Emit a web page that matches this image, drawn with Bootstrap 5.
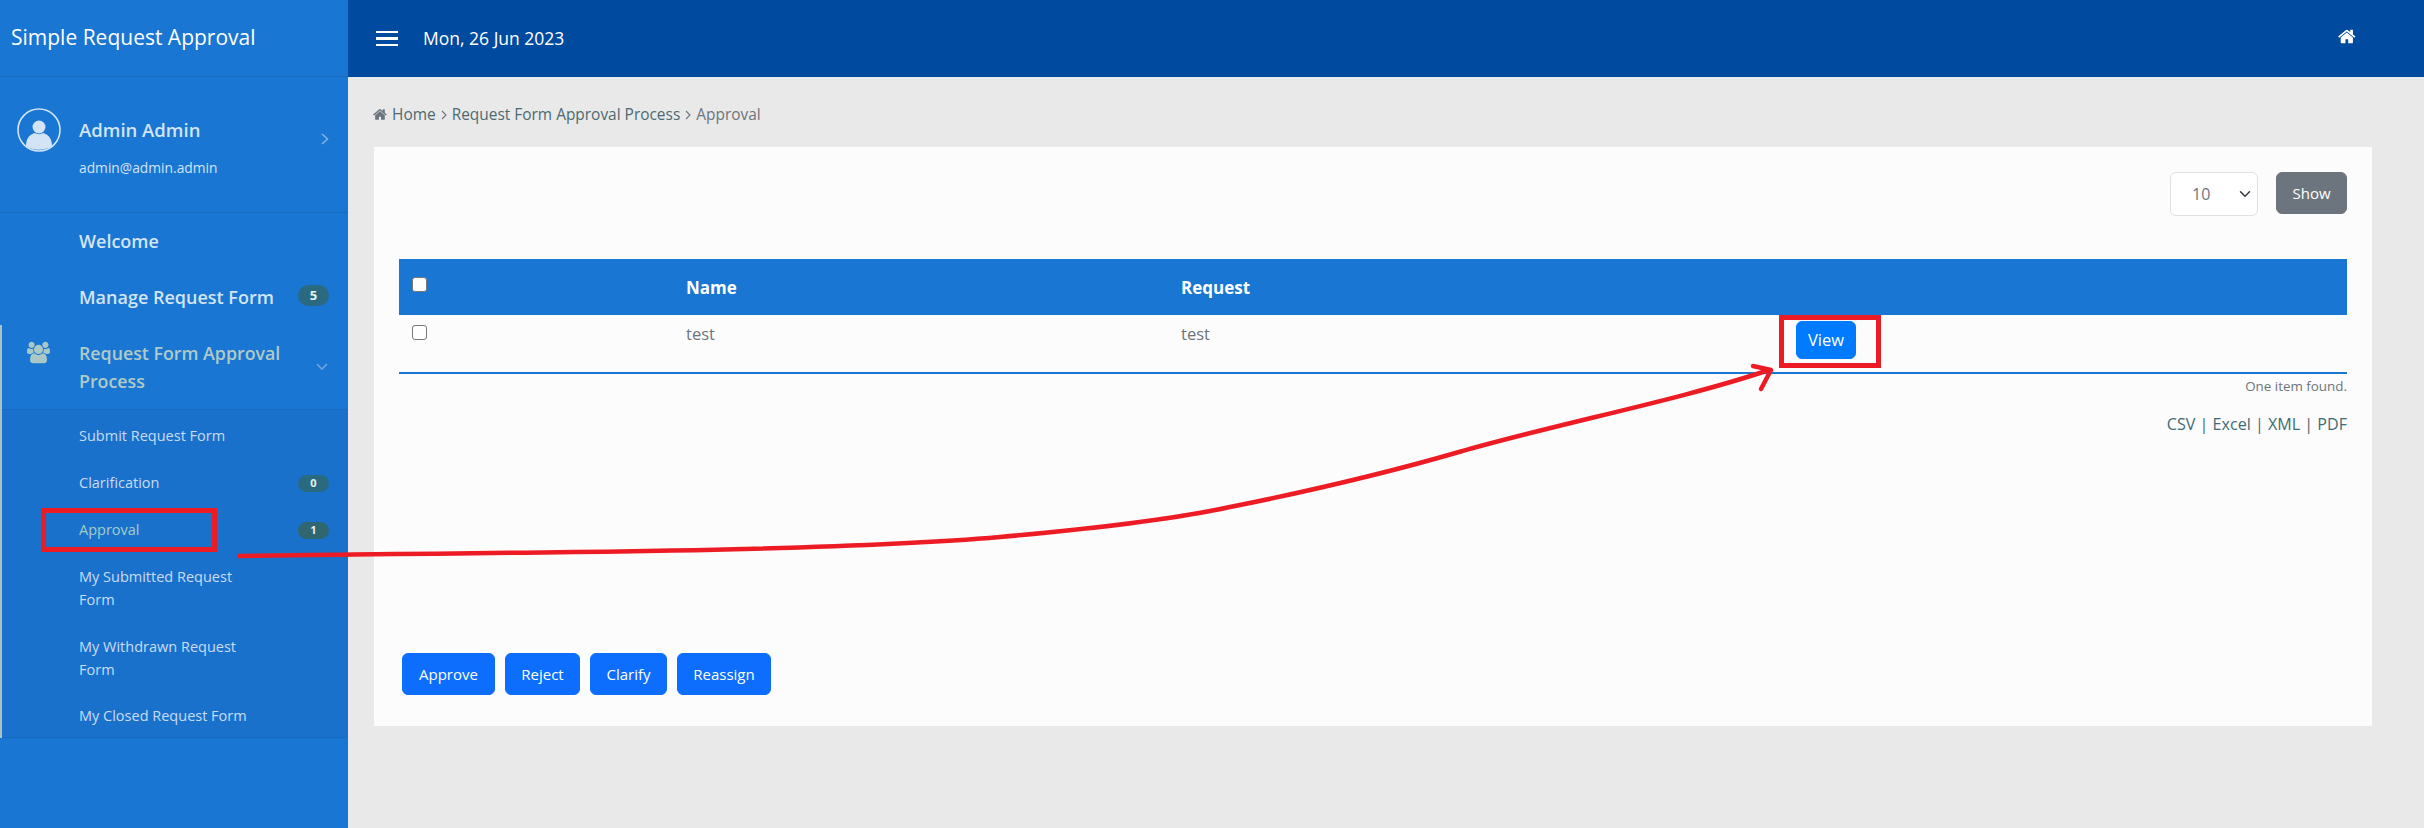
<!DOCTYPE html>
<html lang="en">
<head>
<meta charset="utf-8">
<title>Simple Request Approval</title>
<link href="https://cdn.jsdelivr.net/npm/bootstrap@5.3.0/dist/css/bootstrap.min.css" rel="stylesheet">
<style>
html,body{height:828px;overflow:hidden}
body{font-family:"Open Sans","Noto Sans",sans-serif;background:#e9e9e9;color:#6c757d;font-size:15px}
.app-shell{width:2424px;height:828px;position:relative}
.side{width:348px;background:#1976d2;color:#fff;flex:none}
.brand{height:77px;font-size:21px;padding-left:11px;border-bottom:1px solid #166bc1;padding-bottom:1px}
.profile{height:136px;border-bottom:1px solid #166bc1;padding:31px 18px 0 17px;color:#d3e4f7}
.avatar{width:44px;height:44px;flex:none}
.profile-name{font-weight:600;font-size:18.5px;margin-left:18px;line-height:24px;margin-top:10px}
.profile-mail{font-size:13.8px;margin-top:16px;line-height:20px;white-space:nowrap}
.chev{flex:none}
.top-item{height:56px;padding:0 19px 0 79px;font-weight:600;font-size:18px;color:#d3e4f7}
.pill{width:31px;background:#2a6a80;color:#e8f0f2;border-radius:12px;font-weight:700;font-size:13px;line-height:21px;height:21px;text-align:center;margin-top:-3px}
.pill-sm{height:16.5px;line-height:16px;font-size:11px;margin-top:2px}
.pill-dark{background:#2f6670}
.open-group{border-left:2px solid #a9c3c3}
.open-head{height:84px;padding:0 19px 0 77px;font-weight:600;font-size:17.8px;line-height:28px;color:#b0cac8;position:relative}
.group-ico{position:absolute;left:25px;top:16px}
.sub{background:#1971cc;border-top:1px solid #166bc1;border-bottom:1px solid #166bc1;color:#c9dcf5;font-size:14.5px;line-height:23px;padding-top:2px}
.sub-item{padding:0 19px 0 77px}
.sub-active{color:#a5cdc8}
.item-a,.item-b,.item-c{height:47px}
.item-d,.item-e{height:70px}
.item-f{height:44px}
.main{min-width:0}
.topbar{height:77px;background:#004a9f;color:#fff;padding:0 0 0 28px;font-size:17.5px}
.burger{width:22px;flex:none;margin-right:25px}
.burger i{display:block;height:2.5px;background:#fff;margin:4.2px 0}
.home-top{margin-left:auto;margin-right:67px;margin-top:-5px}
.crumb{padding:5px 25px 0;height:70px;font-size:15.45px;color:#4d6a70}
.crumb .sep{margin:0 5px 0 5px}
.crumb .here{color:#6c757d}
.panel{background:#fcfcfc;margin:0 52px 0 26px;height:579px;padding:25px 25px 0 25px}
.size-select{width:88px;height:44px;font-size:16px;color:#6c757d;margin-right:18px;padding-left:21px;border-radius:6px;background-position:right 4px center}
.show-btn{width:71px;height:42px;font-size:15px;padding:0}
.pager-row{height:87px}
.req-table{table-layout:fixed;width:100%;margin:0;font-size:16.5px;color:#6c757d}
.req-table th{background:#1976d2;color:#fff;height:56px;border:0;font-size:17px;font-weight:700;padding:2px 13px 0;vertical-align:middle}
.req-table td{height:58px;background:#fcfcfc;border-bottom:2px solid #1976d2;padding:7px 13px 0;vertical-align:top;color:#6c757d}
.req-table .form-check-input{margin:3px 0 0;width:15px;height:15px;border:1.5px solid #777;border-radius:3px;display:block}
.req-table th .form-check-input{margin-top:-7px}
.c1{width:274px}.c2{width:495px}.c3{width:615px}
.req-table .view-btn{background:#007bff;border-color:#007bff;width:60px;height:38px;padding:0;font-size:16.5px;display:block;margin-top:-1px}
.found{font-size:13.4px;text-align:right;line-height:18px;margin-top:3px}
.exports{font-size:16.1px;text-align:right;color:#3f6c74;margin-top:17px;line-height:24px}
.actions{gap:10px;margin-top:217px;margin-left:3px}
.actions .btn{height:42px;padding:0;font-size:15px}
.w1{width:93px}.w2{width:75px}.w3{width:77px}.w4{width:94px}
.marks{position:absolute;left:0;top:0;pointer-events:none}
</style>
</head>
<body>
<div class="app-shell d-flex">
  <aside class="side d-flex flex-column">
    <div class="brand d-flex align-items-center">Simple Request Approval</div>
    <div class="profile d-flex">
      <svg class="avatar" viewBox="0 0 44 44"><circle cx="22" cy="22" r="21" fill="none" stroke="#d3e4f7" stroke-width="1.6"/><circle cx="22" cy="19" r="6.5" fill="#d3e4f7"/><path d="M9 38c0-9 5-12 9-13 2 1.500 6 1.500 8 0 4 1 9 4 9 13-7 5-19 5-26 0z" fill="#d3e4f7"/></svg>
      <div class="flex-grow-1">
        <div class="profile-name">Admin Admin</div>
        <div class="profile-name profile-mail fw-normal">admin@admin.admin</div>
      </div>
      <svg class="chev mt-4" width="10" height="14" viewBox="0 0 10 14"><path d="M2 2l5.500 5L2 12" fill="none" stroke="#7fb0e6" stroke-width="1.600"/></svg>
    </div>
    <nav class="d-flex flex-column">
      <div class="top-item d-flex align-items-center">Welcome</div>
      <div class="top-item d-flex align-items-center justify-content-between"><span>Manage Request Form</span><span class="pill">5</span></div>
      <div class="open-group">
        <div class="open-head d-flex align-items-center justify-content-between">
          <svg class="group-ico" width="23" height="23" viewBox="0 0 1920 1792"><path fill="#a9c8c6" d="M593 896q-162 5-265 128h-134q-82 0-138-40.500t-56-118.500q0-353 124-353 6 0 43.500 21t97.500 42.500 119 21.500q67 0 133-23-5 37-5 66 0 139 81 256zm1071 637q0 120-73 189.500t-194 69.500h-874q-121 0-194-69.500t-73-189.500q0-53 3.500-103.500t14-109 26.500-108.500 43-97.500 62-81 85.500-53.500 111.500-20q10 0 43 21.500t73 48 107 48 135 21.500 135-21.500 107-48 73-48 43-21.500q61 0 111.500 20t85.500 53.500 62 81 43 97.500 26.500 108.500 14 109 3.500 103.500zm-1024-1277q0 106-75 181t-181 75-181-75-75-181 75-181 181-75 181 75 75 181zm704 384q0 159-112.500 271.500t-271.500 112.500-271.500-112.500-112.500-271.500 112.500-271.500 271.500-112.500 271.500 112.500 112.500 271.500zm576 225q0 78-56 118.500t-138 40.500h-134q-103-123-265-128 81-117 81-256 0-29-5-66 66 23 133 23 59 0 119-21.500t97.500-42.500 43.500-21q124 0 124 353zm-128-609q0 106-75 181t-181 75-181-75-75-181 75-181 181-75 181 75 75 181z"/></svg>
          <span>Request Form Approval<br>Process</span>
          <svg class="chev" width="14" height="10" viewBox="0 0 14 10"><path d="M2 2l5 5 5-5" fill="none" stroke="#6fa4dc" stroke-width="1.600"/></svg>
        </div>
        <div class="sub">
          <div class="sub-item d-flex align-items-center item-a">Submit Request Form</div>
          <div class="sub-item d-flex align-items-center justify-content-between item-b"><span>Clarification</span><span class="pill pill-sm">0</span></div>
          <div class="sub-item d-flex align-items-center justify-content-between item-c"><span class="sub-active">Approval</span><span class="pill pill-sm pill-dark">1</span></div>
          <div class="sub-item d-flex align-items-center item-d"><span>My Submitted Request<br>Form</span></div>
          <div class="sub-item d-flex align-items-center item-e"><span>My Withdrawn Request<br>Form</span></div>
          <div class="sub-item d-flex align-items-center item-f">My Closed Request Form</div>
        </div>
      </div>
    </nav>
  </aside>
  <main class="main flex-grow-1">
    <header class="topbar d-flex align-items-center">
      <div class="burger"><i></i><i></i><i></i></div>
      <span>Mon, 26 Jun 2023</span>
      <svg class="home-top" width="19" height="19" viewBox="0 0 1792 1792"><path fill="#fff" d="M1408 992v480q0 26-19 45t-45 19h-384v-384h-256v384h-384q-26 0-45-19t-19-45v-480q0-1 .5-3t.5-3l575-474 575 474q1 2 1 6zm223-69l-62 74q-8 9-21 11h-3q-13 0-21-7l-692-577-692 577q-12 8-24 7-13-2-21-11l-62-74q-8-10-7-23.500t11-21.500l719-599q32-26 76-26t76 26l244 204v-195q0-14 9-23t23-9h192q14 0 23 9t9 23v408l219 182q10 8 11 21.500t-7 23.500z"/></svg>
    </header>
    <div class="crumb d-flex align-items-center">
      <svg class="me-1" width="15" height="15" viewBox="0 0 1792 1792"><path fill="#6c757d" d="M1408 992v480q0 26-19 45t-45 19h-384v-384h-256v384h-384q-26 0-45-19t-19-45v-480q0-1 .5-3t.5-3l575-474 575 474q1 2 1 6zm223-69l-62 74q-8 9-21 11h-3q-13 0-21-7l-692-577-692 577q-12 8-24 7-13-2-21-11l-62-74q-8-10-7-23.500t11-21.500l719-599q32-26 76-26t76 26l244 204v-195q0-14 9-23t23-9h192q14 0 23 9t9 23v408l219 182q10 8 11 21.500t-7 23.500z"/></svg>
      <span>Home</span>
      <svg class="sep" width="6" height="10" viewBox="0 0 6 10"><path d="M1 1l4 4-4 4" fill="none" stroke="#6c757d" stroke-width="1.100"/></svg>
      <span>Request Form Approval Process</span>
      <svg class="sep" width="6" height="10" viewBox="0 0 6 10"><path d="M1 1l4 4-4 4" fill="none" stroke="#6c757d" stroke-width="1.100"/></svg>
      <span class="here">Approval</span>
    </div>
    <section class="panel">
      <div class="pager-row d-flex justify-content-end align-items-start">
        <select class="form-select size-select" aria-label="Page size"><option>10</option></select>
        <button class="btn btn-secondary show-btn" type="button">Show</button>
      </div>
      <table class="table req-table">
        <colgroup><col class="c1"><col class="c2"><col class="c3"><col></colgroup>
        <thead><tr><th><input class="form-check-input" type="checkbox" aria-label="All"></th><th>Name</th><th>Request</th><th></th></tr></thead>
        <tbody><tr><td><input class="form-check-input" type="checkbox" aria-label="Row"></td><td>test</td><td>test</td><td><button class="btn btn-primary view-btn" type="button">View</button></td></tr></tbody>
      </table>
      <div class="found">One item found.</div>
      <div class="exports">CSV | Excel | XML | PDF</div>
      <div class="actions d-flex">
        <button class="btn btn-primary w1" type="button">Approve</button>
        <button class="btn btn-primary w2" type="button">Reject</button>
        <button class="btn btn-primary w3" type="button">Clarify</button>
        <button class="btn btn-primary w4" type="button">Reassign</button>
      </div>
    </section>
  </main>
  <svg class="marks" width="2424" height="828" viewBox="0 0 2424 828">
    <g fill="none" stroke="#ed1c24">
      <rect x="43.500" y="510.500" width="171" height="39" stroke-width="5"/>
      <rect x="1781.500" y="317.500" width="97" height="48" stroke-width="5"/>
      <path d="M238 556L312 555C600 552 850 550 1000 537C1090 529 1170 520 1230 507C1310 491 1390 472 1459 452C1560 423 1680 400 1769 370" stroke-width="4.500"/>
      <path d="M1753 366L1771 370L1761 389" stroke-width="4.500" stroke-linecap="round" stroke-linejoin="round"/>
    </g>
  </svg>
</div>
<script src="https://cdn.jsdelivr.net/npm/bootstrap@5.3.0/dist/js/bootstrap.bundle.min.js"></script>
</body>
</html>
